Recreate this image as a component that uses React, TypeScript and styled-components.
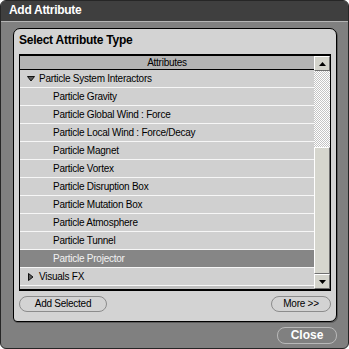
import React from "react"
import styled, {createGlobalStyle} from "styled-components"

const GlobalStyle = createGlobalStyle`
    html, body {
        margin: 0;
        padding: 0;
        background: #ffffff;
    }
    * { box-sizing: border-box; }
`

const Window = styled.div`
    width: 349px;
    height: 349px;
    display: flex;
    flex-direction: column;
    background: #808080;
    border: 1px solid #262626;
    border-radius: 6px;
    overflow: hidden;
    font-family: "Liberation Sans", Arial, sans-serif;
`

const TitleBar = styled.div`
    height: 21px;
    flex-shrink: 0;
    background: #3f3f3f;
    border-bottom: 1px solid #b4b4b4;
    color: #ffffff;
    font-size: 12px;
    font-weight: bold;
    letter-spacing: -0.3px;
    line-height: 19px;
    padding-left: 8px;
`

const Body = styled.div`
    flex: 1;
    display: flex;
    flex-direction: column;
    padding: 6px 11px 4px 12px;
    gap: 5px;
`

const Panel = styled.div`
    height: 294px;
    display: flex;
    flex-direction: column;
    background: #d3d3d3;
    border: 1px solid #000000;
    border-radius: 7px 7px 7px 4px;
    box-shadow: 1px 1px 0 #5c5c5c;
    padding: 0 5px;
`

const Heading = styled.div`
    height: 25px;
    line-height: 23px;
    font-size: 12px;
    font-weight: bold;
    letter-spacing: -0.25px;
    color: #000000;
`

const List = styled.div`
    height: 237px;
    display: grid;
    grid-template-columns: 1fr 16px;
    border: 1px solid #000000;
    border-top-width: 2px;
    border-bottom-width: 2px;
    background: #d0d0d0;
`

const Rows = styled.div`
    display: flex;
    flex-direction: column;
    min-width: 0;
`

const Header = styled.div`
    height: 14px;
    flex-shrink: 0;
    background: #b4b4b4;
    border-bottom: 1px solid #000000;
    font-size: 10px;
    letter-spacing: -0.25px;
    line-height: 13px;
    text-align: center;
    color: #000000;
`

const Row = styled.div<{$selected?: boolean; $indent: number}>`
    height: 18px;
    flex-shrink: 0;
    display: flex;
    align-items: center;
    gap: 4px;
    padding-left: ${p => p.$indent}px;
    background: ${p => p.$selected ? "#868686" : "#d0d0d0"};
    color: ${p => p.$selected ? "#f2f2f2" : "#000000"};
    border-bottom: 1px solid #f6f6f6;
    font-size: 10px;
    letter-spacing: -0.25px;
    white-space: nowrap;
    &:last-child { border-bottom: 1px solid #000000; }
`

const Footer = styled.div`
    flex: 1;
    background: #bfbfbf;
`

const Scrollbar = styled.div`
    display: flex;
    flex-direction: column;
    background: repeating-conic-gradient(#ffffff 0 25%, #c4c4c4 0 50%) 0 0 / 2px 2px;
`

const ScrollButton = styled.div`
    height: 15px;
    flex-shrink: 0;
    display: flex;
    align-items: center;
    justify-content: center;
    background: #d4d4cc;
    border-top: 1px solid #ffffff;
    border-left: 1px solid #ffffff;
    border-right: 1px solid #6e6e6e;
    border-bottom: 1px solid #6e6e6e;
`

const Track = styled.div<{$size: number}>`
    height: ${p => p.$size}px;
    flex-shrink: 0;
`

const Thumb = styled.div`
    flex: 1;
    background: #d6d6ce;
    border-top: 1px solid #ffffff;
    border-left: 1px solid #ffffff;
    border-right: 1px solid #707070;
    border-bottom: 1px solid #707070;
`

const Buttons = styled.div`
    display: flex;
    justify-content: space-between;
    margin-top: 5px;
`

const PillButton = styled.button<{$width: number}>`
    width: ${p => p.$width}px;
    height: 16px;
    padding: 0;
    background: transparent;
    border: 1px solid #8c8c8c;
    border-radius: 8px;
    font-family: "Liberation Sans", Arial, sans-serif;
    font-size: 10px;
    letter-spacing: -0.25px;
    color: #000000;
    line-height: 14px;
`

const CloseRow = styled.div`
    display: flex;
    justify-content: flex-end;
`

const CloseButton = styled.button`
    width: 60px;
    height: 17px;
    padding: 0;
    background: #808080;
    border: 1px solid #b8b8b8;
    border-radius: 8px;
    font-family: "Liberation Sans", Arial, sans-serif;
    font-size: 12px;
    font-weight: bold;
    color: #ffffff;
    line-height: 15px;
`

const Arrow: React.FC<{open: boolean}> = ({open}) => (
    <svg width="8" height="8" viewBox="0 0 8 8">
        {open
            ? <polygon points="0.5,1.5 7.5,1.5 4,6" fill="#5a5a5a" stroke="#111111" strokeWidth="1"/>
            : <polygon points="1.5,0.5 1.5,7.5 6,4" fill="#5a5a5a" stroke="#111111" strokeWidth="1"/>}
    </svg>
)

const ScrollArrow: React.FC<{up: boolean}> = ({up}) => (
    <svg width="7" height="4" viewBox="0 0 7 4">
        <polygon points={up ? "0,4 7,4 3.5,0" : "0,0 7,0 3.5,4"} fill="#000000"/>
    </svg>
)

interface Item {
    label: string
    group?: boolean
    open?: boolean
    selected?: boolean
}

const items: Array<Item> = [
    {label: "Particle System Interactors", group: true, open: true},
    {label: "Particle Gravity"},
    {label: "Particle Global Wind : Force"},
    {label: "Particle Local Wind : Force/Decay"},
    {label: "Particle Magnet"},
    {label: "Particle Vortex"},
    {label: "Particle Disruption Box"},
    {label: "Particle Mutation Box"},
    {label: "Particle Atmosphere"},
    {label: "Particle Tunnel"},
    {label: "Particle Projector", selected: true},
    {label: "Visuals FX", group: true, open: false},
]

const App: React.FC = () => (
    <>
        <GlobalStyle/>
        <Window>
            <TitleBar>Add Attribute</TitleBar>
            <Body>
                <Panel>
                    <Heading>Select Attribute Type</Heading>
                    <List>
                        <Rows>
                            <Header>Attributes</Header>
                            {items.map((item, i) => (
                                <Row key={i} $selected={item.selected} $indent={item.group ? 7 : 33}>
                                    {item.group && <Arrow open={!!item.open}/>}
                                    <span>{item.label}</span>
                                </Row>
                            ))}
                            <Footer/>
                        </Rows>
                        <Scrollbar>
                            <ScrollButton><ScrollArrow up/></ScrollButton>
                            <Track $size={76}/>
                            <Thumb/>
                            <ScrollButton><ScrollArrow up={false}/></ScrollButton>
                        </Scrollbar>
                    </List>
                    <Buttons>
                        <PillButton $width={88}>Add Selected</PillButton>
                        <PillButton $width={60}>More &gt;&gt;</PillButton>
                    </Buttons>
                </Panel>
                <CloseRow>
                    <CloseButton>Close</CloseButton>
                </CloseRow>
            </Body>
        </Window>
    </>
)

export default App
